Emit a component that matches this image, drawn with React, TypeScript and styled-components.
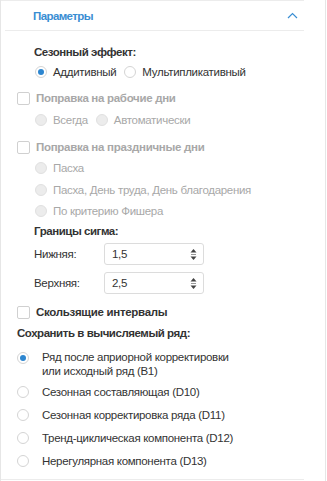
import styled, { createGlobalStyle } from 'styled-components'

const GlobalStyle = createGlobalStyle`
  html, body {
    margin: 0;
    padding: 0;
    background: #fff;
  }
  body {
    font-family: "Liberation Sans", Arial, sans-serif;
    font-size: 11.5px;
    letter-spacing: -0.3px;
    color: #333;
  }
`

const Frame = styled.div`
  width: 324px;
  height: 481px;
  border-left: 1px solid #e6e6e6;
  border-right: 1px solid #e6e6e6;
  box-sizing: content-box;
`

const Panel = styled.div`
  width: 303px;
  height: 480px;
  border-top: 1px solid #ececec;
  border-bottom: 1px solid #ececec;
  box-sizing: border-box;
  display: flex;
  flex-direction: column;
`

const Header = styled.div`
  height: 29px;
  margin-left: 4px;
  border-bottom: 1px solid #ececec;
  display: flex;
  align-items: center;
  justify-content: space-between;
  padding: 0 6px 0 28px;
  color: #3a8ed3;
  font-weight: bold;
  letter-spacing: -0.6px;
`

const Body = styled.div`
  display: flex;
  flex-direction: column;
`

const Label = styled.div<{ $mt: number; $indent: number }>`
  margin-top: ${p => p.$mt}px;
  padding-left: ${p => p.$indent}px;
  height: 18px;
  line-height: 18px;
  font-weight: bold;
  letter-spacing: -0.45px;
  color: #333;
`

const Row = styled.div<{ $mt: number; $indent: number; $h?: number }>`
  margin-top: ${p => p.$mt}px;
  padding-left: ${p => p.$indent}px;
  height: ${p => p.$h ?? 18}px;
  display: flex;
  align-items: center;
  gap: 6px;
`

const RadioItem = styled.span<{ $disabled?: boolean }>`
  display: inline-flex;
  align-items: center;
  gap: 6px;
  color: ${p => (p.$disabled ? '#a8a8a8' : '#333')};
  margin-right: 2px;
`

const Circle = styled.span<{ $checked?: boolean; $disabled?: boolean }>`
  width: 12px;
  height: 12px;
  box-sizing: border-box;
  border-radius: 50%;
  border: 1px solid ${p => (p.$disabled ? '#e0e0e0' : '#d4d4d4')};
  background: ${p => (p.$disabled ? '#ececec' : '#fff')};
  display: inline-flex;
  align-items: center;
  justify-content: center;
  flex-shrink: 0;

  &::after {
    content: '';
    display: ${p => (p.$checked ? 'block' : 'none')};
    width: 6px;
    height: 6px;
    border-radius: 50%;
    background: #2d86d0;
  }
`

const Box = styled.span`
  width: 13px;
  height: 13px;
  box-sizing: border-box;
  border: 1px solid #d0d0d0;
  border-radius: 2px;
  background: #fff;
  flex-shrink: 0;
`

const CheckText = styled.span<{ $disabled?: boolean }>`
  font-weight: bold;
  letter-spacing: -0.3px;
  color: ${p => (p.$disabled ? '#a8a8a8' : '#333')};
`

const FieldRow = styled.div<{ $mt: number }>`
  margin-top: ${p => p.$mt}px;
  padding-left: 33px;
  height: 22px;
  display: flex;
  align-items: center;
`

const FieldLabel = styled.span`
  width: 70px;
  color: #333;
`

const SpinBox = styled.div`
  width: 100px;
  height: 22px;
  box-sizing: border-box;
  border: 1px solid #dcdcdc;
  border-radius: 3px;
  display: flex;
  align-items: center;
  justify-content: space-between;
  padding: 0 6px 0 7px;
  color: #333;
`

const SaveItem = styled.div<{ $mt: number; $h: number }>`
  margin-top: ${p => p.$mt}px;
  height: ${p => p.$h}px;
  padding-left: 16px;
  display: flex;
  align-items: flex-start;
  gap: 13px;
`

const SaveCircleWrap = styled.span<{ $top: number }>`
  padding-top: ${p => p.$top}px;
  display: inline-flex;
`

const SaveText = styled.span<{ $top: number }>`
  padding-top: ${p => p.$top}px;
  line-height: 14px;
  color: #333;
`

const ChevronUp = () => (
  <svg width="11" height="7" viewBox="0 0 11 7">
    <path d="M1 6 L5.5 1.5 L10 6" fill="none" stroke="#3a8ed3" strokeWidth="1.2" />
  </svg>
)

const Spinner = () => (
  <svg width="7" height="13" viewBox="0 0 7 13">
    <path d="M0.5 4.5 L3.5 1 L6.5 4.5 Z" fill="#444" />
    <rect x="1" y="6" width="5" height="1" fill="#999" />
    <path d="M0.5 8.5 L3.5 12 L6.5 8.5 Z" fill="#444" />
  </svg>
)

const Radio = ({ label, checked, disabled }: { label: string; checked?: boolean; disabled?: boolean }) => (
  <RadioItem $disabled={disabled}>
    <Circle $checked={checked} $disabled={disabled} />
    {label}
  </RadioItem>
)

const saveOptions = [
  'Сезонная составляющая (D10)',
  'Сезонная корректировка ряда (D11)',
  'Тренд-циклическая компонента (D12)',
  'Нерегулярная компонента (D13)',
]

export default function App() {
  return (
    <>
      <GlobalStyle />
      <Frame>
        <Panel>
          <Header>
            <span>Параметры</span>
            <ChevronUp />
          </Header>
          <Body>
            <Label $mt={12} $indent={33}>Сезонный эффект:</Label>
            <Row $mt={2} $indent={34}>
              <Radio label="Аддитивный" checked />
              <Radio label="Мультипликативный" />
            </Row>

            <Row $mt={8} $indent={16}>
              <Box />
              <CheckText $disabled>Поправка на рабочие дни</CheckText>
            </Row>
            <Row $mt={4} $indent={34}>
              <Radio label="Всегда" disabled />
              <Radio label="Автоматически" disabled />
            </Row>

            <Row $mt={9} $indent={16}>
              <Box />
              <CheckText $disabled>Поправка на праздничные дни</CheckText>
            </Row>
            <Row $mt={3} $indent={34}>
              <Radio label="Пасха" disabled />
            </Row>
            <Row $mt={4} $indent={34}>
              <Radio label="Пасха, День труда, День благодарения" disabled />
            </Row>
            <Row $mt={3} $indent={34}>
              <Radio label="По критерию Фишера" disabled />
            </Row>

            <Label $mt={2} $indent={33}>Границы сигма:</Label>
            <FieldRow $mt={3}>
              <FieldLabel>Нижняя:</FieldLabel>
              <SpinBox>
                <span>1,5</span>
                <Spinner />
              </SpinBox>
            </FieldRow>
            <FieldRow $mt={7}>
              <FieldLabel>Верхняя:</FieldLabel>
              <SpinBox>
                <span>2,5</span>
                <Spinner />
              </SpinBox>
            </FieldRow>

            <Row $mt={9} $indent={16}>
              <Box />
              <CheckText>Скользящие интервалы</CheckText>
            </Row>
            <Label $mt={3} $indent={16}>Сохранить в вычисляемый ряд:</Label>

            <SaveItem $mt={8} $h={31}>
              <SaveCircleWrap $top={2}>
                <Circle $checked />
              </SaveCircleWrap>
              <SaveText $top={0}>
                Ряд после априорной корректировки
                <br />
                или исходный ряд (B1)
              </SaveText>
            </SaveItem>
            {saveOptions.map(opt => (
              <SaveItem key={opt} $mt={0} $h={23}>
                <SaveCircleWrap $top={5}>
                  <Circle />
                </SaveCircleWrap>
                <SaveText $top={4}>{opt}</SaveText>
              </SaveItem>
            ))}
          </Body>
        </Panel>
      </Frame>
    </>
  )
}
